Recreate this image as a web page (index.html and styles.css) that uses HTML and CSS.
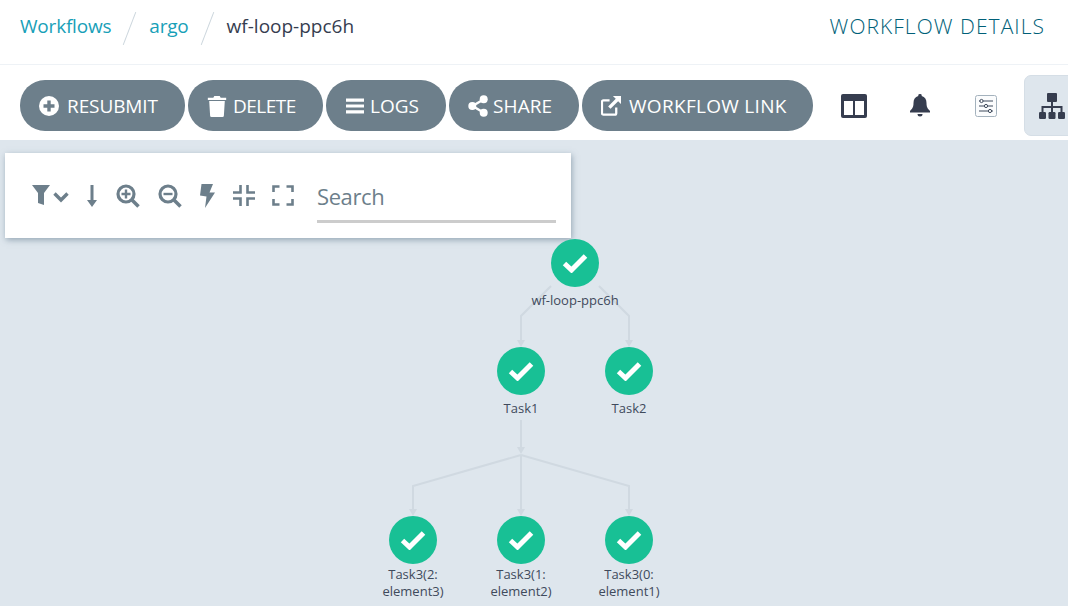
FILE: index.html
```html
<!DOCTYPE html>
<html lang="en">
<head>
<meta charset="utf-8">
<title>wf-loop-ppc6h</title>
<link rel="stylesheet" href="styles.css">
</head>
<body>
<header class="top">
  <nav class="crumbs">
    <a class="crumb link">Workflows</a><span class="slash"></span>
    <a class="crumb link">argo</a><span class="slash"></span>
    <span class="crumb">wf-loop-ppc6h</span>
  </nav>
  <h1 class="title">WORKFLOW DETAILS</h1>
</header>
<div class="toolbar">
  <div class="actions">
    <button class="btn b-resubmit"><svg class="ic" viewBox="0 0 20 20"><circle cx="10" cy="10" r="10" fill="#fff"/><path d="M8.300 4.500h3.400v3.800h3.800v3.400h-3.800v3.800H8.300v-3.800H4.500V8.300h3.800z" fill="#6d7f8b"/></svg>RESUBMIT</button>
    <button class="btn b-delete"><svg class="ic" viewBox="0 0 20 24"><path d="M7 1h6l1 2h6v2.500H0V3h6zM1.500 6.500h17l-1 16q-.1 1.500-1.500 1.500H4q-1.400 0-1.500-1.500z" fill="#fff"/></svg>DELETE</button>
    <button class="btn b-logs"><svg class="ic" viewBox="0 0 20 20"><path d="M1 2.500h18v3.200H1zM1 8.400h18v3.200H1zM1 14.300h18v3.200H1z" fill="#fff"/></svg>LOGS</button>
    <button class="btn b-share"><svg class="ic" viewBox="0 0 20 22"><path d="M15.500 4.500 4.500 11l11 6.500" fill="none" stroke="#fff" stroke-width="2.400"/><circle cx="15.700" cy="4.300" r="4" fill="#fff"/><circle cx="4.300" cy="11" r="4" fill="#fff"/><circle cx="15.700" cy="17.700" r="4" fill="#fff"/></svg>SHARE</button>
    <button class="btn b-link"><svg class="ic" viewBox="0 0 21 21"><path d="M16 12v6a1.500 1.500 0 0 1-1.500 1.500h-12A1.500 1.500 0 0 1 1 18V6a1.500 1.500 0 0 1 1.500-1.500H9" fill="none" stroke="#fff" stroke-width="2.400"/><path d="M12.500 0H21v8.500l-3-3-8 8-2.500-2.500 8-8z" fill="#fff"/></svg>WORKFLOW LINK</button>
  </div>
  <div class="tools">
    <span class="tool"><svg class="columns" viewBox="0 0 26 24"><rect width="26" height="24" rx="2" fill="#363d4f"/><rect x="3" y="7" width="9" height="14" fill="#fff"/><rect x="14" y="7" width="9" height="14" fill="#fff"/></svg></span>
    <span class="tool"><svg class="bell" viewBox="0 0 20 23"><path d="M10 0a1.700 1.700 0 0 1 1.700 2C15 2.800 16.500 5.500 16.500 9c0 4 1 5.500 3.500 8v1.500H0V17c2.500-2.500 3.500-4 3.500-8 0-3.500 1.500-6.200 4.800-7A1.700 1.700 0 0 1 10 0z" fill="#363d4f"/><path d="M7.500 20h5a2.500 2.500 0 0 1-5 0z" fill="#363d4f"/></svg></span>
    <span class="tool"><svg class="sliders" viewBox="0 0 22 22"><rect x=".5" y=".5" width="21" height="21" rx="2" fill="#fbfcfd" stroke="#a4b2bd"/><path d="M4 6h14M4 11h14M4 16h14" stroke="#3f4a5c" stroke-width="1"/><circle cx="6.500" cy="6" r="1.600" fill="#fff" stroke="#3f4a5c"/><circle cx="11" cy="11" r="1.600" fill="#fff" stroke="#3f4a5c"/><circle cx="15" cy="16" r="1.600" fill="#fff" stroke="#3f4a5c"/></svg></span>
    <span class="tool active"><svg class="sitemap" viewBox="0 0 26 26"><rect x="8" width="10" height="9" rx="1" fill="#363d4f"/><path d="M13 9v5M3.500 19v-5h19v5M13 14v5" fill="none" stroke="#363d4f" stroke-width="2"/><rect y="19" width="7" height="7" rx="1.200" fill="#363d4f"/><rect x="9.500" y="19" width="7" height="7" rx="1.200" fill="#363d4f"/><rect x="19" y="19" width="7" height="7" rx="1.200" fill="#363d4f"/></svg></span>
  </div>
</div>
<main class="canvas">
  <div class="panel">
    <div class="panel-icons">
      <svg class="p-filter" viewBox="0 0 37 20"><path d="M0 0h18l-6 8v12l-6-2V8z" fill="#6d7f8b"/><path d="M22.500 8.500l6.500 6.500 6.500-6.500" fill="none" stroke="#6d7f8b" stroke-width="3.400"/></svg>
      <svg class="p-down" viewBox="0 0 10 22"><path d="M3.500 0h3v15H10l-5 7-5-7h3.500z" fill="#6d7f8b"/></svg>
      <svg class="p-zoom" viewBox="0 0 24 24"><circle cx="10" cy="10" r="8" fill="none" stroke="#6d7f8b" stroke-width="3.200"/><path d="M15.500 15.500l7 7" stroke="#6d7f8b" stroke-width="3.600"/><path d="M10 5.500v9M5.500 10h9" stroke="#6d7f8b" stroke-width="2.400"/></svg>
      <svg class="p-zoom" viewBox="0 0 24 24"><circle cx="10" cy="10" r="8" fill="none" stroke="#6d7f8b" stroke-width="3.200"/><path d="M15.500 15.500l7 7" stroke="#6d7f8b" stroke-width="3.600"/><path d="M5.500 10h9" stroke="#6d7f8b" stroke-width="2.400"/></svg>
      <svg class="p-bolt" viewBox="0 0 15 24"><path d="M1.500 0H13L9.500 8.500H15L5 24 6.500 12.500 0 11.500z" fill="#6d7f8b"/></svg>
      <svg class="p-frame" viewBox="0 0 22 21"><path d="M7.500 0v7.500H0M14.500 0v7.500H22M7.500 21v-7.500H0M14.500 21v-7.500H22" fill="none" stroke="#6d7f8b" stroke-width="2.600"/></svg>
      <svg class="p-frame expand" viewBox="0 0 22 21"><path d="M1.500 7v-5.500h6M20.500 7v-5.500H14.500M1.500 14v5.500h6M20.500 14v5.500H14.500" fill="none" stroke="#6d7f8b" stroke-width="2.600"/></svg>
    </div>
    <div class="search">Search</div>
  </div>
  <svg class="edges" viewBox="0 0 1068 466">
    <g fill="none" stroke="#d0d9e1" stroke-width="2">
      <path d="M551 146 521 176V202"/>
      <path d="M599 146 629 176V202"/>
      <path d="M521 280V310"/>
      <path d="M521 315 413 346V371"/>
      <path d="M521 315V371"/>
      <path d="M521 315 629 346V371"/>
    </g>
    <g fill="#d0d9e1">
      <path d="M517 200h8L521 207z"/>
      <path d="M625 200h8L629 207z"/>
      <path d="M517 307h8L521 314z"/>
      <path d="M409 369h8L413 376z"/>
      <path d="M517 369h8L521 376z"/>
      <path d="M625 369h8L629 376z"/>
    </g>
  </svg>
  <div class="node n-root"><span class="dot"><svg viewBox="0 0 26 20"><path d="M2.500 10.500 9.500 17 23.500 3" fill="none" stroke="#fff" stroke-width="5"/></svg></span><span class="label">wf-loop-ppc6h</span></div>
  <div class="node n-t1"><span class="dot"><svg viewBox="0 0 26 20"><path d="M2.500 10.500 9.500 17 23.500 3" fill="none" stroke="#fff" stroke-width="5"/></svg></span><span class="label">Task1</span></div>
  <div class="node n-t2"><span class="dot"><svg viewBox="0 0 26 20"><path d="M2.500 10.500 9.500 17 23.500 3" fill="none" stroke="#fff" stroke-width="5"/></svg></span><span class="label">Task2</span></div>
  <div class="node n-a"><span class="dot"><svg viewBox="0 0 26 20"><path d="M2.500 10.500 9.500 17 23.500 3" fill="none" stroke="#fff" stroke-width="5"/></svg></span><span class="label two">Task3(2:<br>element3)</span></div>
  <div class="node n-b"><span class="dot"><svg viewBox="0 0 26 20"><path d="M2.500 10.500 9.500 17 23.500 3" fill="none" stroke="#fff" stroke-width="5"/></svg></span><span class="label two">Task3(1:<br>element2)</span></div>
  <div class="node n-c"><span class="dot"><svg viewBox="0 0 26 20"><path d="M2.500 10.500 9.500 17 23.500 3" fill="none" stroke="#fff" stroke-width="5"/></svg></span><span class="label two">Task3(0:<br>element1)</span></div>
</main>
</body>
</html>
```
FILE: styles.css
```css
* { box-sizing: border-box; }
html, body { margin: 0; height: 100%; overflow: hidden; }
body {
  width: 1068px;
  height: 606px;
  background: #fff;
  color: #363d4f;
  font-family: "Open Sans", "Noto Sans", sans-serif;
  display: flex;
  flex-direction: column;
}
.top {
  height: 65px;
  flex: none;
  border-bottom: 1px solid #eef2f6;
  padding: 0 23px 12px 20px;
  display: flex;
  align-items: center;
  justify-content: space-between;
}
.crumbs { display: flex; align-items: center; }
.crumb { font-size: 19px; color: #363d4f; }
.crumb.link { color: #18a0b8; letter-spacing: -0.2px; }
.slash {
  width: 1px;
  height: 35px;
  margin: 4px 19px 0 18px;
  background: #ccd6dd;
  transform: rotate(21deg);
}
.title {
  margin: 0;
  font-size: 21px;
  font-weight: 300;
  color: #005f78;
  letter-spacing: 1.05px;
}
.toolbar {
  height: 75px;
  flex: none;
  display: flex;
  overflow: hidden;
  background: #fff;
}
.actions { display: flex; gap: 3px; padding: 15px 0 0 20px; align-items: flex-start; }
.btn {
  height: 51px;
  border: 0;
  border-radius: 25px;
  background: #6d7f8b;
  color: #fff;
  font: 400 19px "Open Sans", sans-serif;
  padding: 0 0 0 19px;
  display: flex;
  align-items: center;
  white-space: nowrap;
}
.b-resubmit { width: 165px; letter-spacing: -0.1px; gap: 8px; }
.b-delete { width: 135px; letter-spacing: -0.5px; gap: 6px; }
.b-logs { width: 120px; letter-spacing: 0; gap: 5px; }
.b-share { width: 130px; letter-spacing: 0.1px; gap: 5px; }
.b-link { width: 231px; letter-spacing: 0.3px; gap: 8px; }
.ic { width: 20px; height: 22px; flex: none; }
.tools { display: flex; margin-left: 13px; padding-top: 10px; gap: 10px; align-items: flex-start; }
.tool {
  width: 56px;
  height: 61px;
  flex: none;
  display: flex;
  align-items: center;
  justify-content: center;
}
.tool.active {
  background: #dee6ed;
  border: 1px solid #d5dee6;
  border-radius: 7px;
}
.columns { width: 26px; height: 24px; }
.bell { width: 20px; height: 23px; }
.sliders { width: 22px; height: 22px; }
.sitemap { width: 26px; height: 26px; }
.canvas {
  position: relative;
  flex: 1;
  background: #dee6ed;
  overflow: hidden;
}
.panel {
  position: absolute;
  left: 5px;
  top: 13px;
  width: 566px;
  height: 85px;
  background: #fff;
  box-shadow: 1px 2px 6px rgba(90, 115, 135, .55);
  display: flex;
  padding-left: 27px;
}
.panel-icons { display: flex; align-items: center; height: 85px; flex: none; width: 285px; }
.p-filter { width: 37px; height: 20px; margin-right: 18px; margin-top: -2px; }
.p-down { width: 10px; height: 22px; margin-right: 19px; }
.p-zoom { width: 24px; height: 24px; margin-right: 18px; }
.p-bolt { width: 15px; height: 24px; margin-right: 18px; }
.p-frame { width: 22px; height: 21px; margin-right: 17px; }
.p-frame.expand { margin-right: 0; }
.search {
  width: 239px;
  height: 70px;
  padding-top: 25px;
  font-size: 22px;
  line-height: 36px;
  color: #6d7f8b;
  letter-spacing: -0.4px;
  border-bottom: 3px solid #ccc;
}
.edges {
  position: absolute;
  left: 0;
  top: 0;
  width: 1068px;
  height: 466px;
}
.node {
  position: absolute;
  width: 110px;
  display: flex;
  flex-direction: column;
  align-items: center;
  text-align: center;
}
.n-root { left: 520px; top: 99px; }
.n-t1 { left: 466px; top: 207px; }
.n-t2 { left: 574px; top: 207px; }
.n-a { left: 358px; top: 376px; }
.n-b { left: 466px; top: 376px; }
.n-c { left: 574px; top: 376px; }
.dot {
  width: 48px;
  height: 48px;
  border-radius: 50%;
  background: #18c095;
  display: flex;
  align-items: center;
  justify-content: center;
}
.dot svg { width: 26px; height: 20px; }
.label { font-size: 13px; line-height: 17px; margin-top: 5px; color: #3f4a5c; }
.label.two { margin-top: 2px; }
```
